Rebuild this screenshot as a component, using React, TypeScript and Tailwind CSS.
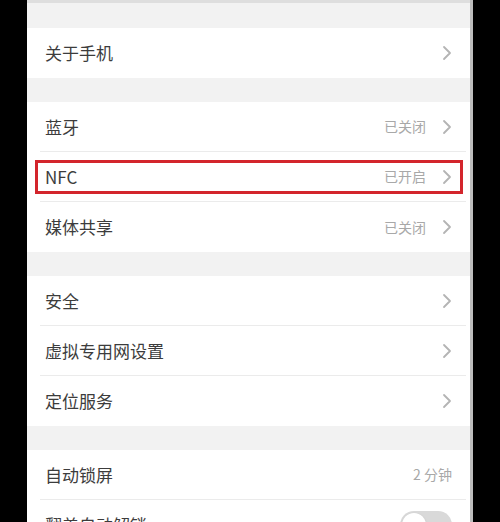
import type { ReactNode } from "react";

const font = { fontFamily: '"Noto Sans CJK SC", "Noto Sans", sans-serif' };

type Item = { label: string; value?: string; chevron?: boolean; toggle?: boolean; highlight?: boolean };

const groups: Item[][] = [
  [{ label: "关于手机", chevron: true }],
  [
    { label: "蓝牙", value: "已关闭", chevron: true },
    { label: "NFC", value: "已开启", chevron: true, highlight: true },
    { label: "媒体共享", value: "已关闭", chevron: true },
  ],
  [
    { label: "安全", chevron: true },
    { label: "虚拟专用网设置", chevron: true },
    { label: "定位服务", chevron: true },
  ],
  [
    { label: "自动锁屏", value: "2 分钟" },
    { label: "翻盖自动解锁", toggle: true },
  ],
];

function Chevron() {
  return (
    <svg width="10" height="16" viewBox="0 0 10 16" className="shrink-0">
      <polyline points="2,2 8,8 2,14" fill="none" stroke="#b4b4b4" strokeWidth="1.8" strokeLinecap="round" strokeLinejoin="round" />
    </svg>
  );
}

function Toggle() {
  return (
    <div className="relative h-[28px] w-[52px] rounded-full bg-[#d9d9d9] p-[2px]">
      <div className="h-[24px] w-[24px] rounded-full bg-white shadow" />
    </div>
  );
}

function Row({ item, last }: { item: Item; last: boolean }): ReactNode {
  return (
    <div className="relative flex h-[50px] flex-col bg-white">
      <div className="flex flex-1 items-center pl-[18px] pr-[18px]">
        <span className="flex-1 text-[17px] text-[#3c3c3c]">{item.label}</span>
        {item.value ? (
          <span className={`text-[14px] text-[#a8a8a8] ${item.chevron ? "mr-[16px]" : ""}`}>{item.value}</span>
        ) : null}
        {item.chevron ? <Chevron /> : null}
        {item.toggle ? <Toggle /> : null}
      </div>
      {!last ? <div className="ml-[13px] mr-[4px] h-px bg-[#ebebeb]" /> : null}
      {item.highlight ? (
        <div className="absolute bottom-[8px] left-[8px] right-[7px] top-[8px] border-[3px] border-[#d3252c]" />
      ) : null}
    </div>
  );
}

export default function App() {
  return (
    <div className="flex h-[522px] w-[500px] overflow-hidden bg-black" style={font}>
      <div className="ml-[27px] flex w-[446px] flex-col border-r-[3px] border-[#bdbdbd] bg-[#f2f2f2]">
        <div className="h-[3px] shrink-0 bg-[#dedede]" />
        <div className="h-[25px] shrink-0" />
        {groups.map((group, gi) => (
          <div key={gi} className="shrink-0">
            {group.map((item, i) => (
              <Row key={item.label} item={item} last={i === group.length - 1} />
            ))}
            {gi < groups.length - 1 ? <div className="h-[24px]" /> : null}
          </div>
        ))}
      </div>
    </div>
  );
}
